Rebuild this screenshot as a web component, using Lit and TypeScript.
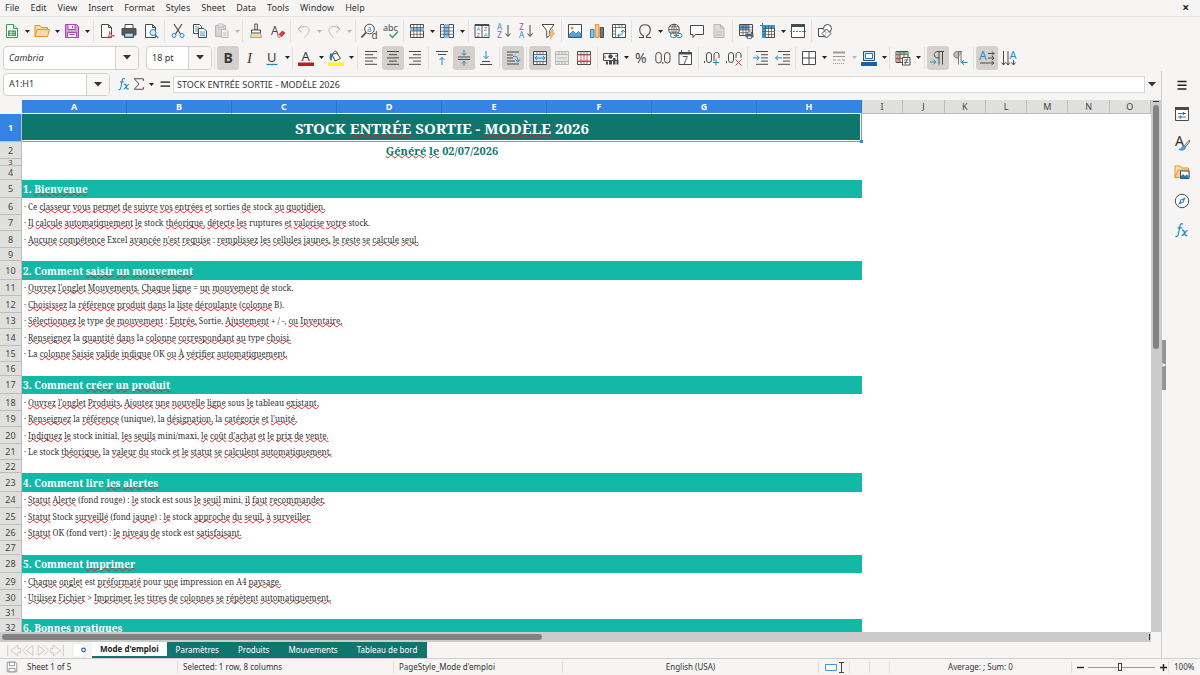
import { LitElement, html, svg, css, TemplateResult } from "lit";
import { customElement } from "lit/decorators.js";
import { classMap } from "lit/directives/class-map.js";
import { styleMap } from "lit/directives/style-map.js";

const K = "#4a4a4a";
const B = "#1e8bcd";
const R = "#d9363e";
const P = "#a844b8";
const G = "#3a9d5b";
const O = "#e8912d";
const D = "#b8b8b8";

const icons: Record<string, TemplateResult> = {
  new: svg`<path d="M2.500 1.500h7l4 4v9h-11z" fill="#fff" stroke="${G}"/><path d="M9.500 1.500v4h4" fill="#d5ecd9" stroke="${G}"/><path d="M4 7.500h8v5.500h-8z" fill="${G}"/><path d="M5 9.300h6M5 11.300h6M7 8v5" stroke="#fff" stroke-width=".6"/>`,
  open: svg`<path d="M1 13.500V2.500h5l1.500 2h6v2" fill="#fbd9a5" stroke="${O}"/><path d="M1 13.500L3.200 6.500h12.300l-2 7z" fill="#fcdc9f" stroke="${O}"/>`,
  save: svg`<path d="M1.500 1.500h11l2 2v11h-13z" fill="#d39bdc" stroke="${P}"/><path d="M4 1.500h7v5h-7z" fill="#fff" stroke="${P}"/><path d="M3.500 9.500h9v5h-9z" fill="#fff" stroke="${P}"/><path d="M8.500 2.800v2.400" stroke="${P}"/><path d="M5.500 11.500h5" stroke="${P}"/>`,
  pdf: svg`<path d="M2.500 1.500h7l3 3v10h-10z" fill="#fff" stroke="${K}"/><path d="M9.500 1.500v3h3" fill="none" stroke="${K}"/><path d="M8 15c2-2 3-4 2.500-6.500c0 2 2 4.500 5 4.500c-3-.5-5 .3-7.500 2z" fill="#fff" stroke="${R}" stroke-width=".9"/>`,
  print: svg`<path d="M4 1.500h8v4h-8z" fill="#fff" stroke="${K}"/><path d="M1 5.500h14v6.500h-14z" fill="#54585c" stroke="${K}"/><path d="M3.500 10h9v4.500h-9z" fill="#7bb8e6" stroke="${K}"/><path d="M5 12h6" stroke="#fff"/>`,
  preview: svg`<path d="M2.500 1.500h7l3 3v10h-10z" fill="#fff" stroke="${K}"/><path d="M9.500 1.500v3h3" fill="none" stroke="${K}"/><circle cx="10" cy="9.500" r="3" fill="#d8ecfa" stroke="${B}"/><path d="M12.200 11.800l3 3.200" stroke="${B}" stroke-width="1.400"/>`,
  cut: svg`<path d="M4 1l6.500 10M12 1L5.500 11" stroke="${K}" stroke-width="1.200"/><circle cx="4" cy="12.500" r="2" fill="none" stroke="${B}"/><circle cx="12" cy="12.500" r="2" fill="none" stroke="${B}"/>`,
  copy: svg`<path d="M1.500 1.500h6l2 2v7h-8z" fill="#fff" stroke="${K}"/><path d="M3 4h4M3 6h4M3 8h4" stroke="${B}" stroke-width=".8"/><path d="M6.500 5.500h5.500l2.500 2.500v6.500h-8z" fill="#fff" stroke="${K}"/><path d="M8 9h5M8 11h5M8 12.700h5" stroke="${B}" stroke-width=".8"/>`,
  paste: svg`<path d="M1.500 2.500h10v11h-10z" fill="#d4d4d4" stroke="${D}"/><path d="M4 1h5v3h-5z" fill="#eee" stroke="${D}"/><path d="M7.500 6.500h4.500l2 2v6h-6.500z" fill="#f3f3f3" stroke="${D}"/><path d="M9 10h3.500M9 12h3.500" stroke="${D}"/>`,
  brush: svg`<path d="M6.800 1h2.500v6h-2.500z" fill="#fff" stroke="${K}"/><path d="M3.500 7h9v3h-9z" fill="#fff" stroke="${K}"/><path d="M3.500 10.500h9l1 4h-11z" fill="#fcdc9f" stroke="${O}"/>`,
  clear: svg`<text x="1" y="12" font-size="12" fill="${K}">A</text><path d="M8.500 11.500l4-4 3 2.500-4 4.200z" fill="${R}"/><path d="M6.500 13l2-2 3 2.700-1.500 1.300h-2z" fill="#f3a3a6"/>`,
  undo: svg`<path d="M5.500 2.500L2 6.200l4 3M2.500 6.200C6 2.500 12 2.500 13 6.500c.6 3-2 5-4.500 8" fill="none" stroke="${D}"/>`,
  redo: svg`<path d="M10.500 2.500L14 6.200l-4 3M13.500 6.200C10 2.500 4 2.500 3 6.500c-.6 3 2 5 4.500 8" fill="none" stroke="${D}"/>`,
  find: svg`<circle cx="8.500" cy="6" r="4.800" fill="#fff" stroke="${K}"/><path d="M5 9.500l-4.500 5" stroke="${K}" stroke-width="1.700"/><text x="6" y="8.500" font-size="8" fill="${B}">a</text><text x="10.500" y="15.500" font-size="10" fill="${K}">d</text>`,
  spell: svg`<text x="0" y="7.500" font-size="9" fill="${K}">abc</text><path d="M6.500 11.500l3 3 5.500-6" fill="none" stroke="${G}" stroke-width="1.400"/>`,
  rowIcon: svg`<path d="M1.500 1.500h13v13h-13z" fill="#fff" stroke="${K}"/><path d="M1 4.500h14v3.500h-14z" fill="#83beec"/><path d="M1.500 4.500h13M1.500 8h13M1.500 11.300h13M4.700 2v12M8 2v12M11.300 2v12" stroke="${K}" stroke-width=".7"/>`,
  colIcon: svg`<path d="M1.500 1.500h13v13h-13z" fill="#fff" stroke="${K}"/><path d="M5 1h5v14h-5z" fill="#83beec"/><path d="M1.500 4.700h13M1.500 8h13M1.500 11.300h13M5 2v12M10 2v12" stroke="${K}" stroke-width=".7"/>`,
  sort: svg`<path d="M1 1.500h14v13h-14z" fill="#fff" stroke="${K}"/><path d="M1 2h14" stroke="${K}" stroke-width="2"/><path d="M8 2v12" stroke="${K}"/><g font-size="6"><text x="2.500" y="8" fill="${B}">A</text><text x="2.500" y="14" fill="${P}">Z</text><text x="9.800" y="8" fill="${P}">Z</text><text x="9.800" y="14" fill="${B}">A</text></g>`,
  asc: svg`<g font-size="8"><text x="1" y="7" fill="${B}">A</text><text x="1.300" y="15" fill="${P}">Z</text></g><path d="M12 2v11M9.500 10.500l2.500 3 2.500-3" fill="none" stroke="${K}"/>`,
  desc: svg`<g font-size="8"><text x="1.300" y="7" fill="${P}">Z</text><text x="1" y="15" fill="${B}">A</text></g><path d="M12 2v11M9.500 10.500l2.500 3 2.500-3" fill="none" stroke="${K}"/>`,
  filter: svg`<path d="M2 1.500h12l-4.300 6v5l-3 2v-7z" fill="#fff" stroke="${K}"/><path d="M12 7l-3 5h2.500l-1 3.500 4-5.500h-2.500l1.500-3z" fill="#fcc98a" stroke="${O}" stroke-width=".7"/>`,
  image: svg`<path d="M1.500 1.500h13v13h-13z" fill="#fff" stroke="${K}"/><path d="M2 12l4-4 3 3 2.500-2.500L14 11v3h-12z" fill="#5ba6dd" stroke="#2779b8" stroke-width=".8"/><circle cx="5" cy="5" r="1.500" fill="${O}"/>`,
  chart: svg`<path d="M1.500 6.500h3.500v8h-3.500z" fill="#8cc4ee" stroke="${B}"/><path d="M6.300 1.500h3.500v13h-3.500z" fill="#fcc98a" stroke="${O}"/><path d="M11.200 4.500h3.300v10h-3.300z" fill="#777" stroke="${K}"/>`,
  pivot: svg`<path d="M1.500 1.500h13v13h-13z" fill="#fff" stroke="${K}"/><path d="M1.500 4.500h13M4.500 1.500v13M8 1.500v3M11 1.500v3M1.500 8h3M1.500 11h3" stroke="${K}" stroke-width=".7"/><path d="M7 12.500c3 0 5-1.500 5-5M10 9l2-2 2 2M8.500 10.700l-2 2 2 1.500" fill="none" stroke="${B}"/>`,
  omega: svg`<path d="M2 14.500h4.500v-1.500C1 9.500 1.500 1.800 8 1.800s7 7.700 1.500 11.200v1.500h4.500" fill="none" stroke="${K}" stroke-width="1.100"/>`,
  link: svg`<circle cx="7" cy="6.500" r="5.300" fill="#fff" stroke="${K}"/><path d="M1.700 6.500h10.600M2.500 3.800h9M2.500 9.200h9M7 1.200v10.600M7 1.200c-3 3-3 7.600 0 10.600M7 1.200c3 3 3 7.600 0 10.600" fill="none" stroke="${K}" stroke-width=".7"/><rect x="3.500" y="10.500" width="6" height="4" rx="2" fill="#f6f5f4" stroke="${B}"/><rect x="9" y="10.500" width="6" height="4" rx="2" fill="#f6f5f4" stroke="${B}"/><path d="M7 12.500h5" stroke="${B}"/>`,
  comment: svg`<path d="M1.500 2.500h13v9h-8l-2.500 3v-3h-2.500z" fill="#fff" stroke="${K}"/>`,
  page: svg`<path d="M3 1.500h6.500l3.500 3.500v9.500h-10z" fill="#dcdcdc" stroke="${D}"/><path d="M9.500 1.500v3.500h3.500M5 9h6M5 12h6" fill="none" stroke="${D}"/>`,
  printArea: svg`<path d="M1.500 1.500h13v11h-13z" fill="#fff" stroke="${K}"/><path d="M2 2h9v5h-9z" fill="#5ba6dd"/><path d="M1.500 4.300h13M1.500 7h13M1.500 9.700h13M5 2v10M8 2v10M11 2v10" stroke="${K}" stroke-width=".7"/><path d="M7.500 11h8v3.500h-8z" fill="#4c6a85"/><path d="M9.500 9h4v2h-4zM9.500 13h4v2.500h-4z" fill="#fff" stroke="${K}" stroke-width=".7"/>`,
  freeze: svg`<path d="M2.500 2.500h12v12h-12z" fill="#fff" stroke="${K}"/><path d="M2 2h13v3.500h-13z M2 2h3.500v13h-3.500z" fill="#3d97d8"/><path d="M2.500 5.500h12M2.500 8.500h12M2.500 11.500h12M5.500 2.500v12M8.500 2.500v12M11.500 2.500v12" stroke="${K}" stroke-width=".7"/><path d="M2.500 0v5M0 2.500h5" stroke="${B}"/>`,
  split: svg`<path d="M1.500 2h13v12.500h-13z" fill="#fff" stroke="${K}"/><path d="M1 2.500h14" stroke="${K}" stroke-width="3"/><path d="M0 8.500h16" stroke="${B}" stroke-dasharray="2 1"/>`,
  shapes: svg`<path d="M1.500 5.500h7v8h-7z" fill="#fff" stroke="${K}"/><circle cx="10.500" cy="5.500" r="4" fill="#fff" stroke="${K}"/><path d="M9.500 6l4.500 4.500-4.500 4.500L5 10.500z" fill="#fff" fill-opacity=".7" stroke="${K}"/>`,
  bold: svg`<text x="3.500" y="13" font-size="14" font-weight="700" fill="#3a3a3a">B</text>`,
  italic: svg`<text x="5" y="13" font-size="15" font-style="italic" font-family="Liberation Serif" fill="#3a3a3a">I</text>`,
  underline: svg`<text x="3" y="11.500" font-size="13" fill="#3a3a3a">U</text><path d="M2.500 14.500h11" stroke="${B}" stroke-width="1.300"/>`,
  fontColor: svg`<text x="3.500" y="10.500" font-size="13" fill="#3a3a3a">A</text><path d="M0 12.500h16v3.500h-16z" fill="#c01c28"/>`,
  fill: svg`<path d="M4 4.500l5-1.500 3.500 5.500-5.500 2.500z" fill="#fff" stroke="${K}"/><path d="M5 4c1-4 4-4 4.500.5" fill="none" stroke="${K}"/><path d="M2 3.500h4l-1.500 1.500-1 5.500c-2 0-2-2-1.500-7z" fill="#2779b8"/><path d="M0 12.500h16v3.500h-16z" fill="#ffff00"/>`,
  left: svg`<path d="M2 1.500h12M2 4.700h8M2 7.900h12M2 11.100h8M2 14.300h12" stroke="${K}"/>`,
  center: svg`<path d="M2 1.500h12M4 4.700h8M2 7.900h12M4 11.100h8M2 14.300h12" stroke="${K}"/>`,
  right: svg`<path d="M2 1.500h12M6 4.700h8M2 7.900h12M6 11.100h8M2 14.300h12" stroke="${K}"/>`,
  top: svg`<path d="M2 1.500h12M4 4.500h8" stroke="${K}"/><path d="M8 15V7.500M5.500 10l2.500-2.700 2.500 2.700" fill="none" stroke="${B}"/>`,
  middle: svg`<path d="M2 7h12M2 9.500h12" stroke="${K}"/><path d="M8 0v5M5.800 3L8 5.300 10.200 3M8 16v-5M5.800 13.500L8 11.200l2.200 2.300" fill="none" stroke="${B}"/>`,
  bottom: svg`<path d="M2 14.500h12M4 11.500h8" stroke="${K}"/><path d="M8 1v7.500M5.500 6l2.500 2.700 2.500-2.700" fill="none" stroke="${B}"/>`,
  wrap: svg`<path d="M2 2h12M2 5h6M2 8h6M2 11h8M2 14h12" stroke="${K}"/><path d="M8 6.500c3.500-.5 5 .5 5 4.500M10.500 9.500l2.500 2.500 2-2.700" fill="none" stroke="${B}"/>`,
  merge: svg`<path d="M1.500 1.500h13v13h-13z" fill="#fff" stroke="${K}"/><path d="M1.500 4.500h13M1.500 11.500h13M5 1.500v3M8 1.500v3M11 1.500v3M5 11.500v3M8 11.500v3M11 11.500v3" stroke="${K}" stroke-width=".8"/><path d="M2 5h12v6h-12z" fill="#cfe6f8"/><path d="M3 8h10M5 6L3 8l2 2M11 6l2 2-2 2" fill="none" stroke="${B}"/>`,
  mergeOff: svg`<path d="M1.500 1.500h13v13h-13z" fill="#e6e6e6" stroke="${D}"/><path d="M1.500 4.500h13M1.500 11.500h13M5 1.500v3M8 1.500v3M11 1.500v3M5 11.500v3M8 11.500v3M11 11.500v3M3 8h10" stroke="${D}"/>`,
  unmerge: svg`<path d="M1.500 1.500h13v13h-13z" fill="#fff" stroke="${K}"/><path d="M1.500 4.500h13M1.500 11.500h13M5 1.500v3M8 1.500v3M11 1.500v3M5 11.500v3M8 11.500v3M11 11.500v3" stroke="${K}" stroke-width=".8"/><path d="M1.500 5h13v6h-13zM5 5v6M8 5v6M11 5v6" fill="#fff" stroke="${R}" stroke-width=".8"/>`,
  currency: svg`<path d="M.5 3.500h14v7h-14z" fill="#fff" stroke="${K}"/><circle cx="7.500" cy="6.500" r="2.200" fill="${K}"/><path d="M2 5.500v3M13 5v2" stroke="${K}"/><path d="M6 10h3v4.500h-3zM10 8h2.500v6.500h-2.500zM13.500 10h2v4.500h-2zM3 11.500h2v3h-2z" fill="${K}"/>`,
  percent: svg`<text x="2" y="13" font-size="14" fill="${K}">%</text>`,
  number: svg`<rect x=".8" y="2.500" width="5.500" height="10.500" rx="2.700" fill="none" stroke="${K}"/><rect x="9.500" y="2.500" width="5.500" height="10.500" rx="2.700" fill="none" stroke="${K}"/><path d="M7.800 12v2" stroke="${K}"/>`,
  date: svg`<path d="M2 2.500h12.500v12h-12.500z" fill="#fff" stroke="${K}"/><path d="M2 3.500h12.500" stroke="${K}" stroke-width="2"/><path d="M4.500 0v3M12 0v3" stroke="${K}"/><text x="5.300" y="13.500" font-size="10" fill="${K}">7</text>`,
  addDec: svg`<path d="M.5 11v2" stroke="${K}"/><rect x="2.500" y="2.500" width="5" height="10" rx="2.500" fill="none" stroke="${K}"/><path d="M10 11V5c0-3.500 5-3.500 5 0v3" fill="none" stroke="${K}"/><path d="M12 9.500v6M9 12.500h6" stroke="${B}"/>`,
  delDec: svg`<path d="M.5 11v2" stroke="${K}"/><rect x="2.500" y="2.500" width="5" height="10" rx="2.500" fill="none" stroke="${K}"/><path d="M10 8V5c0-3.500 5-3.500 5 0v3" fill="none" stroke="${K}"/><path d="M9.500 9.500l6 6M15.500 9.500l-6 6" stroke="${R}"/>`,
  indent: svg`<path d="M3 1.500h12M8 4.700h7M8 7.900h7M8 11.100h7M3 14.300h12" stroke="${K}"/><path d="M0 7.900h6M3.800 5.500l2.400 2.400-2.400 2.400" fill="none" stroke="${B}"/>`,
  outdent: svg`<path d="M3 1.500h12M8 4.700h7M8 7.900h7M8 11.100h7M3 14.300h12" stroke="${K}"/><path d="M.5 7.900h6.500M3 5.500L.5 7.900 3 10.300" fill="none" stroke="${B}"/>`,
  border: svg`<path d="M1.500 1.500h13v13h-13zM8 1.500v13M1.500 8h13" fill="#fff" stroke="${K}"/>`,
  lineStyle: svg`<path d="M2 2.500h12" stroke="#999" stroke-width="2"/><path d="M2 6.500h12" stroke="#999"/><path d="M2 10h12" stroke="#999" stroke-dasharray="3 1.500"/><path d="M2 13.500h12" stroke="#999" stroke-dasharray="1 1"/>`,
  borderColor: svg`<path d="M2.500 1.500h11v9h-11z" fill="#cfe6f8" stroke="${K}"/><path d="M4.500 3.500h7v5h-7z" fill="#fff" stroke="#2779b8"/><path d="M0 12h16v4h-16z" fill="#1c61a4"/>`,
  conditional: svg`<path d="M1 1.500h12v11h-12z" fill="#fff" stroke="${K}"/><path d="M1.500 2h11v2.500h-11z" fill="#7cc08e"/><path d="M1.500 5h4v7h-4z" fill="#ef8c8c"/><path d="M1 4.700h12M1 8.500h12M5 2v10M9 2v10" stroke="${K}" stroke-width=".7"/><path d="M7.500 7.500h7.500v7.500h-7.500z" fill="#fff" stroke="${K}"/><path d="M9 10h4.500M9 12.500h4.500M12.500 8.500l-2.500 5.500" stroke="${K}" stroke-width=".8"/>`,
  ltr: svg`<path d="M14 1.500H8c-5 0-5 6.500 0 6.500h1V1.500M9 8v6.500M12.500 1.500v13" fill="none" stroke="${K}"/><path d="M0 12h5.500M3.500 9.800l2.300 2.200-2.300 2.200" fill="none" stroke="${B}"/>`,
  rtl: svg`<path d="M10 1.500H5.500c-5 0-5 6.500 0 6.500h1" fill="#bbb" stroke="#777"/><path d="M6.500 1.500v13M9 1.500v11" fill="none" stroke="#777"/><path d="M9.500 12.500h6M12 10.200l-2.500 2.300 2.500 2.200" fill="none" stroke="${B}"/>`,
  horiz: svg`<text x="0" y="9.500" font-size="12" fill="${B}">A</text><path d="M9 3.500h6M13 1.500l2 2-2 2M9 8h6M13 6l2 2-2 2M1 13h14M12.500 11l2.500 2-2.500 2" fill="none" stroke="${K}"/>`,
  vert: svg`<text x="8.500" y="9" font-size="11" fill="${B}">A</text><path d="M2.500 1v14M.5 12.500l2 2.500 2-2.500M7 1v14M5 12.500L7 15l2-2.500M12.500 10v5M10.500 12.500l2 2.500 2-2.500" fill="none" stroke="${K}"/>`,
  fx: svg`<path d="M9 2.300C7.200 1 6.300 2 5.800 4.500L4.400 12c-.4 2.300-1.500 3-3 2.200M3.500 5.800h4.700" fill="none" stroke="${B}" stroke-width="1.200"/><path d="M8 8.500c1.500-1 2 .2 2.500 2.500s1.200 3.300 2.800 2.200M13.700 8.300c-1.700-.3-4 5.500-6 5.200" fill="none" stroke="${B}" stroke-width="1.300"/>`,
  sigma: svg`<path d="M13 4.500v-2.500h-10.500l5.500 6-5.500 6h10.500v-2.500" fill="none" stroke="${K}" stroke-width="1.100"/>`,
  equals: svg`<path d="M3.500 6.200h9.500M3.500 10.200h9.500" stroke="#555" stroke-width="1.700"/>`,
  menu: svg`<path d="M3.500 4.500h9M3.500 8.300h9M3.500 12.100h9" stroke="#222" stroke-width="1.500"/>`,
  props: svg`<path d="M1.500 1.500h13v13h-13z" fill="#fff" stroke="${K}"/><path d="M1 2.500h14" stroke="${K}" stroke-width="3"/><path d="M4 7.500h8M4 11h8" stroke="${K}" stroke-width=".8"/><path d="M9.500 6v3M6.500 9.500v3" stroke="${B}" stroke-width="1.500"/>`,
  styles: svg`<text x="1" y="11" font-size="14" fill="#333">A</text><path d="M15.500 5l-5 5.500 1 1.500 4-5z" fill="#fff" stroke="${K}" stroke-width=".8"/><path d="M5 14.500c3 0 2-3 5-3.500l1.500 1.500c-.5 3-4 3-6.500 2z" fill="#5ba6dd" stroke="#2779b8" stroke-width=".8"/>`,
  gallery: svg`<path d="M1 13.500V2h5l1.500 2h7v2" fill="#fbe3bf" stroke="${O}"/><path d="M1 13.500L4 6h11v7.500z" fill="#fcd08f" stroke="${O}"/><path d="M6.500 7h8.500v7.500h-8.500z" fill="#fff" stroke="#34526b"/><path d="M7 12l2-2 2 2 1.500-1.500 2 1.500v2h-7.500z" fill="#2779b8"/>`,
  compass: svg`<circle cx="8" cy="8" r="6.700" fill="#fff" stroke="${K}"/><path d="M11.800 4.200L9.500 9.500 4.200 11.800 6.500 6.500z" fill="#2e8fd8"/><circle cx="8" cy="8" r="1" fill="#fff"/>`,
  docSave: svg`<path d="M2.500 2.500h10l1 1v10h-11z" fill="#fff" stroke="#8a8a8a"/><path d="M5 2.500h6v4h-6zM4.500 9.500h7v4h-7z" fill="#fff" stroke="#8a8a8a"/>`,
};

const icon = (name: string, size = 16) =>
  html`<svg class="icon" width=${size} height=${size} viewBox="0 0 16 16" aria-hidden="true">${icons[name]}</svg>`;
const caretSvg = html`<svg width="5" height="3" viewBox="0 0 5 3" aria-hidden="true"><path d="M0 0h5l-2.500 3z" fill="currentColor" /></svg>`;
const bigCaret = html`<svg width="8" height="5" viewBox="0 0 8 5" aria-hidden="true"><path d="M0 0h8l-4 4.500z" fill="#333" /></svg>`;

/* Toolbar script: icon name, "v" opens a menu, "|" and ":" are wide and narrow separators,
   a leading "*" marks a pressed button and "-" a disabled one. */
const STANDARD =
  "new v open v save v | pdf print preview | cut copy -paste -v : brush clear : -undo -v -redo -v | find spell : rowIcon v colIcon v | sort asc desc filter | image chart pivot : omega v link comment -page | printArea freeze v split | shapes";
const FORMATTING =
  "| *bold italic underline v : fontColor v fill v | left *center right | top *middle bottom | *wrap | *merge -mergeOff unmerge | currency v percent number date | addDec delDec | indent outdent : border v -lineStyle -v borderColor v : conditional v | *ltr rtl | *horiz vert";

type Row = [height: number, kind: "title" | "date" | "blank" | "section" | "line", text?: string];

/* Words between braces are underlined by the spelling checker. */
const ROWS: Row[] = [
  [28, "title", "STOCK {ENTRÉE} SORTIE - {MODÈLE} 2026"],
  [17, "date", "{Généré le} 02/07/2026"],
  [7, "blank"],
  [14, "blank"],
  [18, "section", "1. {Bienvenue}"],
  [17, "line", "Ce {classeur vous permet} {de} {suivre vos entrées et} sorties {de} stock {au quotidien.}"],
  [16, "line", "{Il calcule automatiquement} {le} stock {théorique,} {détecte les} ruptures {et valorise votre} stock."],
  [17, "line", "{Aucune compétence} Excel {avancée n'est requise} : {remplissez les cellules jaunes, le reste se calcule seul.}"],
  [13, "blank"],
  [19, "section", "2. Comment {saisir un mouvement}"],
  [16, "line", "{Ouvrez l'onglet Mouvements. Chaque ligne} = {un mouvement de} stock."],
  [17, "line", "{Choisissez} la {référence produit dans} la {liste déroulante} ({colonne} B)."],
  [16, "line", "{Sélectionnez le} type {de mouvement} : {Entrée,} Sortie, {Ajustement} + / -, {ou Inventaire.}"],
  [17, "line", "{Renseignez} la {quantité dans} la {colonne correspondant au} type {choisi.}"],
  [16, "line", "La {colonne Saisie valide indique} OK {ou À vérifier automatiquement.}"],
  [14, "blank"],
  [18, "section", "3. Comment {créer un produit}"],
  [17, "line", "{Ouvrez l'onglet Produits. Ajoutez une nouvelle ligne} sous {le} tableau {existant.}"],
  [16, "line", "{Renseignez} la {référence} (unique), la {désignation,} la {catégorie et l'unité.}"],
  [17, "line", "{Indiquez le} stock initial, {les seuils} mini/maxi, {le coût d'achat et le prix de vente.}"],
  [16, "line", "Le stock {théorique,} la {valeur du} stock {et le statut se calculent automatiquement.}"],
  [13, "blank"],
  [19, "section", "4. Comment lire {les alertes}"],
  [16, "line", "{Statut Alerte} (fond rouge) : {le} stock est sous {le seuil} mini, {il faut recommander.}"],
  [17, "line", "{Statut} Stock {surveillé} (fond {jaune}) : {le} stock {approche du seuil, à surveiller.}"],
  [16, "line", "{Statut} OK (fond vert) : {le niveau de} stock est {satisfaisant.}"],
  [14, "blank"],
  [18, "section", "5. Comment {imprimer}"],
  [17, "line", "{Chaque onglet} est {préformaté} pour {une} impression en A4 {paysage.}"],
  [16, "line", "{Utilisez Fichier} > {Imprimer,} {les titres de colonnes se répètent automatiquement.}"],
  [13, "blank"],
  [18, "section", "6. {Bonnes pratiques}"],
];

@customElement("app-root")
export class AppRoot extends LitElement {
  static styles = css`
    :host {
      display: flex;
      flex-direction: column;
      height: 100vh;
      overflow: hidden;
      background: #f6f5f4;
      color: #333;
      font: 9px/12px "Noto Sans", "Open Sans", sans-serif;
    }
    * { box-sizing: border-box; }
    button, select, input { font: inherit; color: inherit; margin: 0; }
    button {
      display: inline-flex;
      align-items: center;
      justify-content: center;
      flex: none;
      padding: 0;
      border: 0;
      background: none;
    }
    svg { display: block; flex: none; overflow: visible; }
    .icon { font-family: "Noto Sans", sans-serif; }

    .menubar { display: flex; align-items: center; gap: 1px; height: 17px; padding: 0 6px 0 0; border-bottom: 1px solid #e4e3e1; }
    .menubar button { padding: 0 5px; height: 16px; }
    .menubar .close { margin-left: auto; font-weight: 700; font-size: 12px; color: #222; }

    .toolbar { display: flex; align-items: center; height: 27px; }
    .standard { padding: 1px 0 0 1px; }
    .formatting { padding-left: 3px; }
    .tool { width: 22px; height: 24px; border-radius: 3px; }
    .pressed { background: #d5d0cc; }
    .caret { width: 8px; height: 24px; color: #222; }
    .caret.off { color: #b8b8b8; }
    .sep { flex: none; width: 1px; height: 22px; margin: 0 2px; background: #e2e0de; }
    .sep.narrow { margin-left: 1px; }

    .combo { display: flex; height: 24px; flex: none; background: #fff; border: 1px solid #d3d0cc; border-radius: 4px; overflow: hidden; }
    .combo > * { min-width: 0; }
    .pick { display: grid; flex: 1; }
    .pick > * { grid-area: 1 / 1; }
    .pick select { appearance: none; border: 0; background: none; padding: 0 5px; outline: 0; min-width: 0; width: 100%; }
    .arrow { display: grid; place-items: center; justify-self: end; width: 23px; background: #f8f7f6; border-left: 1px solid #d3d0cc; pointer-events: none; }
    .font { width: 136px; margin-right: 7px; font-style: italic; }
    .size { width: 66px; }
    .name { width: 107px; height: 23px; margin-right: 5px; }
    .name input { flex: 1; border: 0; padding: 0 5px; outline: 0; background: none; }
    .name button { width: 23px; background: #f8f7f6; border-left: 1px solid #d3d0cc; }

    .main { display: flex; flex: 1; min-height: 0; }
    .work { display: flex; flex-direction: column; flex: 1; min-width: 0; }
    .formula { display: flex; align-items: center; height: 29px; padding: 0 4px 3px 3px; flex: none; }
    .formula .tool { width: 17px; }
    .formula .sigma { width: 14px; }
    .formula .caret { width: 10px; }
    .entry { flex: 1; height: 17px; min-width: 0; margin: 0 2px 0 0; padding: 0 3px; border: 1px solid #d9d9d9; background: #fff; outline: 0; }
    .expand { width: 10px; height: 16px; }

    .view { display: flex; flex: 1; min-height: 0; }
    .canvas { flex: 1; min-width: 0; overflow: hidden; background: #fff; }
    .sheet { width: 100%; table-layout: fixed; border-collapse: separate; border-spacing: 0; }
    .sheet th, .sheet td { padding: 0; overflow: hidden; white-space: nowrap; }
    .head th { height: 14px; font-size: 9px; line-height: 13px; font-weight: 400; background: #dfdfde; border: solid #bdbdbd; border-width: 0 1px 1px 0; color: #444; }
    .head .corner { background: #f6f5f4; border-color: #f6f5f4; }
    .head .picked { background: #3584e4; border-color: #2c73ca; border-bottom-color: #fff; color: #fff; font-weight: 700; }
    .num { background: #dfdfde; border: solid #bdbdbd; border-width: 0 1px 1px 0; font-weight: 400; line-height: 1; color: #444; font-size: 9px; }
    .num.picked { background: #3584e4; color: #fff; font-weight: 700; }
    .num .clip { display: flex; align-items: center; justify-content: center; overflow: hidden; height: 100%; }
    .num .tiny { font-size: 7px; }
    .text { font-family: "Noto Serif", "Droid Serif", "DejaVu Serif Condensed", "DejaVu Serif", serif; line-height: 1; text-align: left; font-size: 8px; color: #333; }
    .title { background: #0f766e; color: #fff; text-align: center; font-weight: 700; font-size: 15px; box-shadow: inset -1px -1px #6f9ade, inset -2px -2px #fff; }
    .date { color: #0f766e; text-align: center; font-weight: 700; font-size: 11px; }
    .section { background: #14b8a6; color: #fff; font-weight: 700; font-size: 10px; }
    .sheet .section { padding-left: 1px; }
    .sheet .line { padding-left: 2px; }
    .sheet .past { position: relative; overflow: visible; }
    .past::before { content: ""; position: absolute; left: -2px; bottom: -1px; width: 3px; height: 3px; background: #3584e4; }
    .wrong { text-decoration: underline wavy #e02020 1px; text-underline-offset: -1px; text-decoration-skip-ink: none; }

    .vbar { width: 10px; background: #cbcbcb; padding: 1px 2px; flex: none; }
    .vbar::before { content: ""; display: block; height: 1px; margin-bottom: 3px; background: #333; }
    .vthumb { height: 46%; border-radius: 3px; background: #828282; }
    .hbar { display: flex; justify-content: space-between; height: 10px; background: #cbcbcb; padding: 2px 1px 2px 2px; margin-right: 10px; flex: none; }
    .hbar::after { content: ""; width: 1px; background: #333; }
    .hthumb { height: 6px; width: 47%; border-radius: 3px; background: #828282; }

    .tabs { display: flex; height: 16px; flex: none; font-size: 8px; }
    .nav { display: flex; width: 70px; padding-left: 5px; flex: none; }
    .nav button { width: 15px; }
    .add { width: 22px; }
    .tab { padding: 0 10px 0 9px; background: #0f766e; color: #fff; }
    .tab.active { padding: 0 8px; background: #fff; color: #222; font-weight: 700; border-bottom: 2px solid #0f766e; }

    .side { display: flex; flex: none; width: 39px; border-left: 1px solid #cfcfcf; }
    .grip { display: grid; place-items: center; align-self: center; width: 4px; height: 50px; background: #959595; }
    .deck { display: flex; flex-direction: column; align-items: center; gap: 5px; flex: 1; padding-top: 2px; padding-right: 2px; }
    .deck .tool { height: 24px; }

    .status {
      display: grid;
      grid-template-columns: 22px 155px 216px 169fr 256fr 31px 20px 20px 182fr 97px 32px;
      align-items: center;
      height: 17px;
      flex: none;
      border-top: 1px solid #cfcfcf;
      white-space: nowrap;
      font-size: 8px;
    }
    .cell { display: flex; align-items: center; height: 12px; padding-left: 5px; border-left: 1px solid #e0dedc; overflow: hidden; }
    .bare { border-left: 0; }
    .mid { justify-content: center; padding: 0; }
    .zoom { gap: 3px; padding-left: 3px; }
    .zoom button { width: 10px; height: 12px; }
    .zoom input { appearance: none; flex: 1; min-width: 0; height: 12px; background: linear-gradient(#999, #999) center / 100% 1px no-repeat; }
    .zoom input::-webkit-slider-thumb { appearance: none; width: 4px; height: 8px; border: 1px solid #444; background: #f6f5f4; }
  `;

  private tools(script: string) {
    return script.split(" ").map((token) => {
      const off = token[0] === "-";
      const pressed = token[0] === "*";
      const name = off || pressed ? token.slice(1) : token;
      if (name === "|" || name === ":") return html`<span class=${classMap({ sep: true, narrow: name === ":" })}></span>`;
      if (name === "v") return html`<button class=${classMap({ caret: true, off })} aria-label="More options">${caretSvg}</button>`;
      return html`<button class=${classMap({ tool: true, pressed })} ?disabled=${off} aria-label=${name}>${icon(name)}</button>`;
    });
  }

  private rich(text: string) {
    return text.split(/[{}]/).map((part, i) =>
      i % 2
        ? part.split(" ").map((word, j) => html`${j ? " " : ""}<span class="wrong">${word}</span>`)
        : part
    );
  }

  private row([height, kind, text = ""]: Row, index: number) {
    return html`<tr style=${styleMap({ height: `${height}px` })}>
      <th class=${classMap({ num: true, picked: index === 0 })} scope="row"><div class=${classMap({ clip: true, tiny: height < 10 })} style=${styleMap({ height: `${height - 1}px` })}>${index + 1}</div></th>
      <td class="text ${kind}" colspan="8">${kind === "line" ? "· " : ""}${this.rich(text)}</td>
      <td class=${classMap({ past: index === 0 })} colspan="7"></td>
    </tr>`;
  }

  render() {
    const nav = ["M1.500 1v14M14 1.500L5 8l9 6.500v-4h3v-5h-3z", "M14 2L6 8l8 6zM7 2L1 8l6 6", "M2 2l8 6-8 6zM9 2l6 6-6 6", "M14.500 1v14M2 1.500L11 8l-9 6.500v-4h-3v-5h3z"];
    return html`
      <nav class="menubar">
        ${["File", "Edit", "View", "Insert", "Format", "Styles", "Sheet", "Data", "Tools", "Window", "Help"].map((m) => html`<button>${m}</button>`)}
        <button class="close" aria-label="Close document">×</button>
      </nav>
      <div class="toolbar standard">${this.tools(STANDARD)}</div>
      <div class="toolbar formatting">
        <div class="combo font"><label class="pick"><select aria-label="Font name"><option>Cambria</option></select><span class="arrow">${bigCaret}</span></label></div>
        <div class="combo size"><label class="pick"><select aria-label="Font size"><option>18 pt</option></select><span class="arrow">${bigCaret}</span></label></div>
        ${this.tools(FORMATTING)}
      </div>
      <div class="main">
        <div class="work">
          <div class="formula">
            <div class="combo name"><input aria-label="Name box" value="A1:H1" /><button aria-label="Named ranges">${bigCaret}</button></div>
            <button class="tool" aria-label="Function wizard">${icon("fx", 14)}</button>
            <button class="tool sigma" aria-label="Sum">${icon("sigma", 14)}</button>
            <button class="caret" aria-label="Sum options">${caretSvg}</button>
            <button class="tool" aria-label="Formula">${icon("equals")}</button>
            <input class="entry" aria-label="Cell content" value="STOCK ENTRÉE SORTIE - MODÈLE 2026" />
            <button class="expand" aria-label="Expand formula bar">${bigCaret}</button>
          </div>
          <div class="view">
            <div class="canvas">
              <table class="sheet">
                <colgroup>
                  <col width="22" />
                  ${[..."ABCDEFGH"].map(() => html`<col width="105" />`)}
                  ${[..."IJKLMNO"].map(() => html`<col />`)}
                </colgroup>
                <thead>
                  <tr class="head">
                    <th class="corner"></th>
                    ${[..."ABCDEFGHIJKLMNO"].map((c, i) => html`<th scope="col" class=${classMap({ picked: i < 8 })}>${c}</th>`)}
                  </tr>
                </thead>
                <tbody>${ROWS.map((r, i) => this.row(r, i))}</tbody>
              </table>
            </div>
            <div class="vbar"><div class="vthumb"></div></div>
          </div>
          <div class="hbar"><div class="hthumb"></div></div>
          <div class="tabs">
            <div class="nav">
              ${nav.map((d) => html`<button aria-label="Scroll tabs"><svg width="14" height="13" viewBox="0 0 16 16"><path d=${d} fill="none" stroke="#c4c4c4" /></svg></button>`)}
            </div>
            <button class="add" aria-label="Add sheet"><svg width="16" height="14" viewBox="0 0 16 14"><path d="M0 0h9l3 3v11h-12z" fill="#fff" stroke="#ddd" stroke-width=".6" /><circle cx="10.500" cy="7" r="1.800" fill="#fff" stroke="#2a5fb0" stroke-width="1.200" /></svg></button>
            <button class="tab active">Mode d'emploi</button>
            ${["Paramètres", "Produits", "Mouvements", "Tableau de bord"].map((t) => html`<button class="tab">${t}</button>`)}
          </div>
        </div>
        <aside class="side">
          <div class="grip"><svg width="4" height="4" viewBox="0 0 4 4"><path d="M.5 0L4 2 .5 4z" fill="#fff" /></svg></div>
          <div class="deck">
            ${["menu", "props", "styles", "gallery", "compass", "fx"].map((n) => html`<button class="tool" aria-label=${n}>${icon(n)}</button>`)}
          </div>
        </aside>
      </div>
      <footer class="status">
        <div class="cell bare">${icon("docSave", 14)}</div>
        <div class="cell bare">Sheet 1 of 5</div>
        <div class="cell">Selected: 1 row, 8 columns</div>
        <div class="cell">PageStyle_Mode d'emploi</div>
        <div class="cell mid">English (USA)</div>
        <div class="cell"><svg width="22" height="12" viewBox="0 0 22 12"><path d="M1.500 3.500h11v6h-11z" fill="#fff" stroke="#3d97d8" /><path d="M15 1.500h5M15 11.500h5M17.500 1.500v10" stroke="#444" /></svg></div>
        <div class="cell"></div>
        <div class="cell"></div>
        <div class="cell mid">Average: ; Sum: 0</div>
        <div class="cell zoom">
          <button aria-label="Zoom out"><svg width="7" height="7" viewBox="0 0 7 7"><path d="M0 3.500h7" stroke="#222" stroke-width="1.400" /></svg></button>
          <input type="range" min="0" max="100" value="48" aria-label="Zoom" />
          <button aria-label="Zoom in"><svg width="7" height="7" viewBox="0 0 7 7"><path d="M0 3.500h7M3.500 0v7" stroke="#222" stroke-width="1.400" /></svg></button>
        </div>
        <div class="cell">100%</div>
      </footer>
    `;
  }
}
